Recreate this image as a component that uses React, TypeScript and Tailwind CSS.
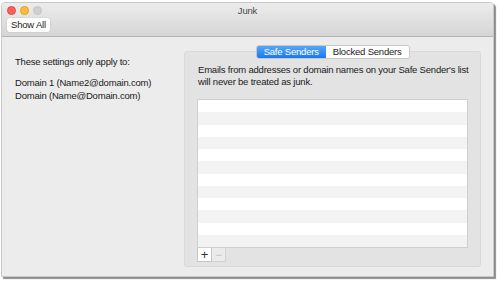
const rows = Array.from({ length: 12 }, (_, i) => i)

function TrafficLights() {
  return (
    <div className="flex items-center gap-[4px]">
      <span className="h-[9px] w-[9px] rounded-full border border-[#e2463f] bg-[#fc605c]" />
      <span className="h-[9px] w-[9px] rounded-full border border-[#e1a116] bg-[#fdbc40]" />
      <span className="h-[9px] w-[9px] rounded-full border border-[#c4c4c4] bg-[#d0d0d0]" />
    </div>
  )
}

export default function App() {
  return (
    <div className="h-[284px] w-[500px] bg-white pl-[1px] pt-[2px] font-['Liberation_Sans',Arial,sans-serif] text-[9.5px] tracking-[-0.2px] text-[#1a1a1a]">
      <div className="flex h-[275px] w-[493px] flex-col overflow-hidden rounded-t-[4px] border border-[#c9c9c9] bg-[#ececec] shadow-[2px_2px_1px_rgba(0,0,0,0.45)]">
        {/* toolbar */}
        <div className="relative h-[34px] shrink-0 border-b border-[#b4b4b4] bg-gradient-to-b from-[#ececec] to-[#d5d5d5] px-[5px] pt-[3px]">
          <TrafficLights />
          <div className="absolute left-0 right-0 top-[1px] text-center text-[9.5px] text-[#4a4a4a]">Junk</div>
          <button className="mt-[3px] h-[14px] rounded-[3px] bg-white px-[4px] text-[9.5px] leading-[14px] text-[#222] shadow-[0_0_0_0.5px_rgba(0,0,0,0.08)]">
            Show All
          </button>
        </div>

        {/* body */}
        <div className="flex flex-1 pt-[14px]">
          <div className="w-[182px] shrink-0 pl-[13px] pt-[4px] leading-[13px]">
            <p>These settings only apply to:</p>
            <p className="mt-[8px]">Domain 1 (Name2@domain.com)</p>
            <p>Domain (Name@Domain.com)</p>
          </div>

          <div className="relative mb-[9px] mr-[12px] flex-1 rounded-[3px] border border-[#d9d9d9] bg-[#e3e3e3] px-[12px] pt-[12px]">
            <div className="absolute -top-[7px] left-0 right-0 flex justify-center">
              <div className="flex h-[14px] overflow-hidden rounded-[3px] border border-[#c8c8c8] leading-[12px]">
                <span className="w-[69px] bg-gradient-to-b from-[#55a6f8] to-[#1878ef] text-center text-white">Safe Senders</span>
                <span className="w-[83px] bg-white text-center text-[#1a1a1a]">Blocked Senders</span>
              </div>
            </div>

            <p className="whitespace-nowrap pl-[1px] leading-[12px]">
              Emails from addresses or domain names on your Safe Sender's list
              <br />
              will never be treated as junk.
            </p>

            <div className="mt-[11px] border border-[#cfcfcf] bg-white">
              {rows.map((i) => (
                <div key={i} className={`h-[12.25px] ${i % 2 === 1 ? 'bg-[#f3f3f3]' : 'bg-white'}`} />
              ))}
            </div>

            <div className="flex">
              <button className="flex h-[14px] w-[15px] items-center justify-center border border-t-0 border-[#c6c6c6] bg-white text-[13px] leading-none text-[#333]">
                +
              </button>
              <button className="flex h-[14px] w-[14px] items-center justify-center border border-l-0 border-t-0 border-[#d2d2d2] bg-[#ebebeb] text-[12px] leading-none text-[#c4c4c4]">
                −
              </button>
            </div>
          </div>
        </div>
      </div>
    </div>
  )
}
